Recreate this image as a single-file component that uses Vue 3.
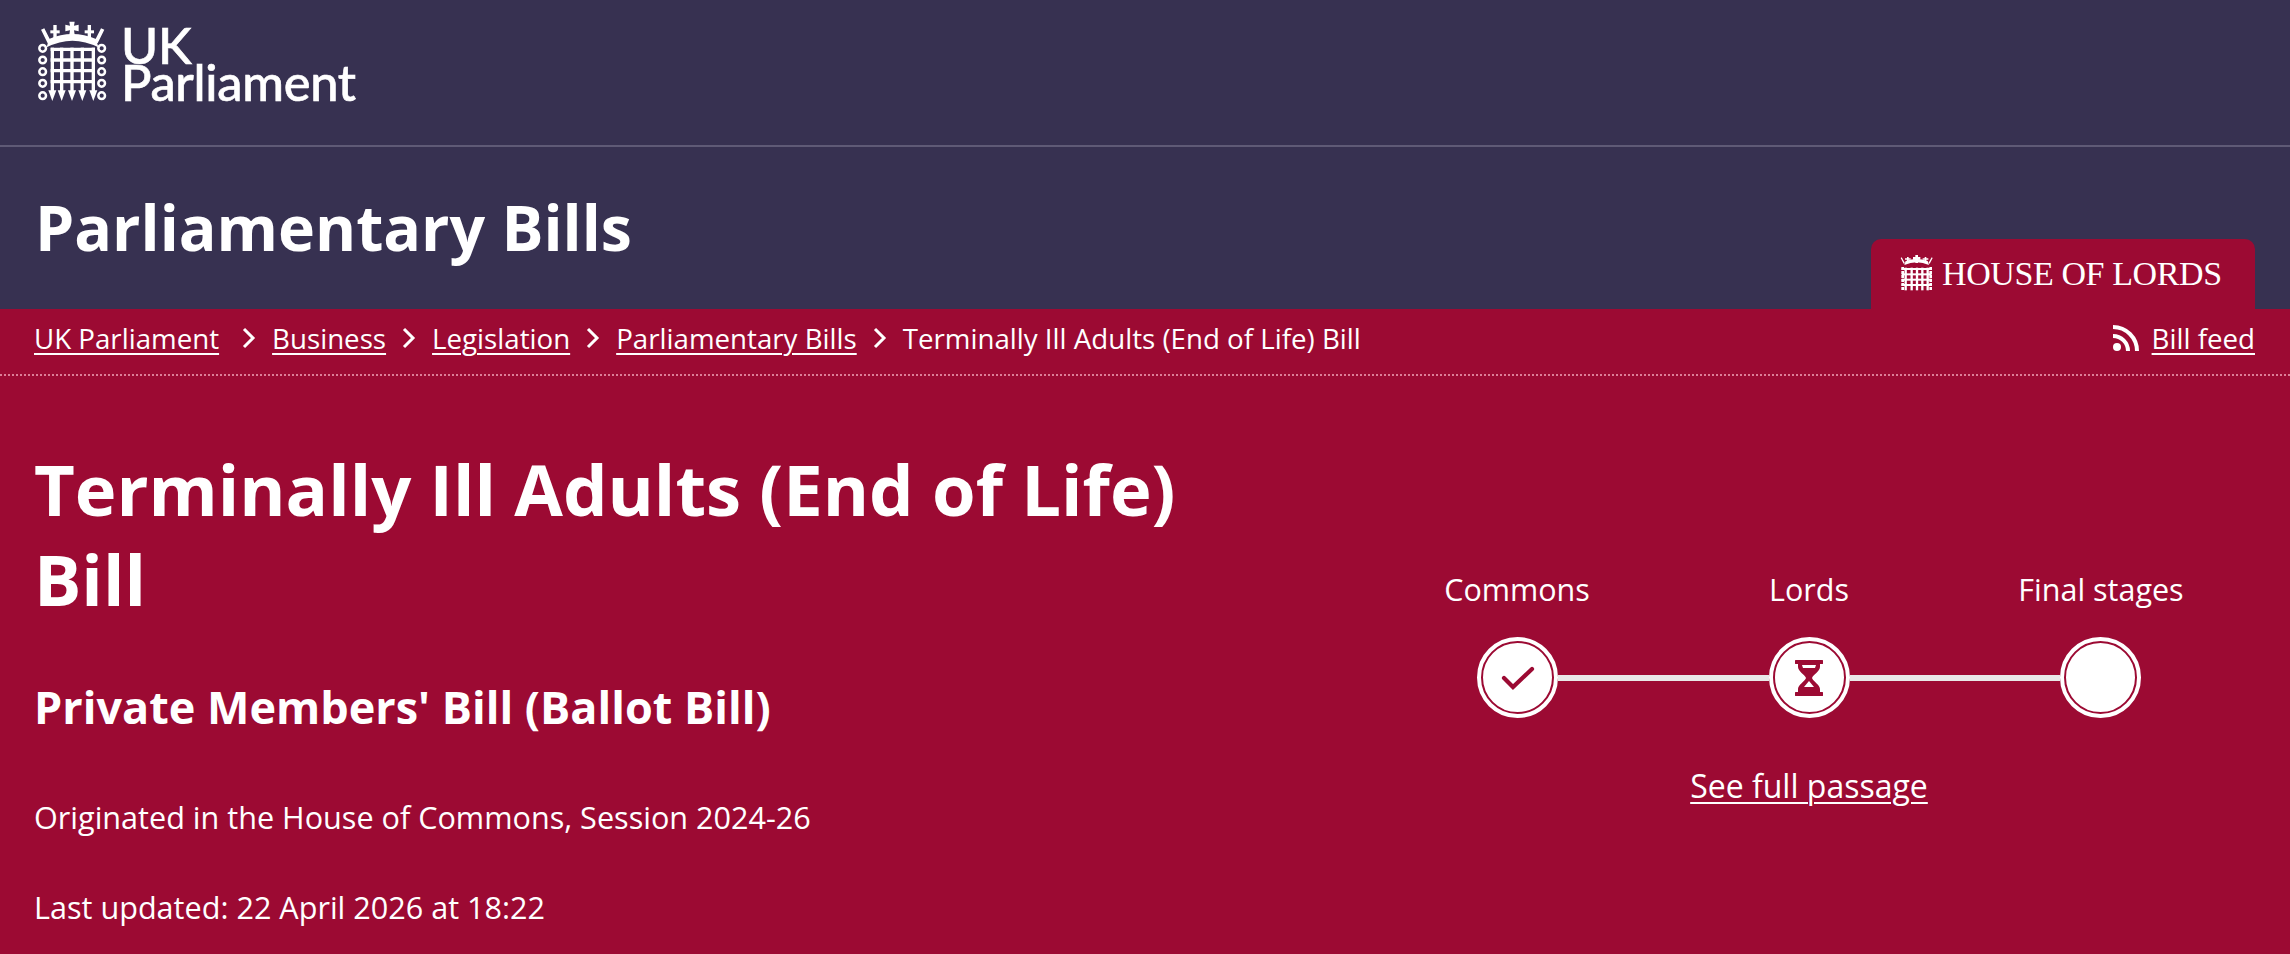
<script setup>
const crumbs = ['UK Parliament', 'Business', 'Legislation', 'Parliamentary Bills']
const bars = [67, 95, 126, 157, 190]
const rows = [103, 135, 167, 200]
const links = [100, 135, 170, 205, 242]
const smallBars = [62, 80, 96, 112, 128]
const smallRows = [72, 88, 104, 120]
const crosses = [
  { x: 75, y: 52 },
  { x: 178, y: 52 }
]
</script>

<template>
  <div class="page">
    <header class="top">
      <a class="logo">
        <svg class="port" viewBox="0 0 270 285" width="90" height="95">
          <g fill="#fff">
            <path d="M50 97Q127 57 205 97L198 72Q127 42 57 72Z" />
            <path d="M118 20h16l-2 12 14-3v20l-14-3 3 20h-18l3-20-14 3V29l14 3z" />
            <g v-for="c in crosses" :key="c.x">
              <rect :x="c.x - 5" :y="c.y - 22" width="10" height="42" />
              <rect :x="c.x - 14" :y="c.y - 6" width="28" height="9" />
            </g>
          </g>
          <g fill="none" stroke="#fff">
            <path d="M38 42l20 40M218 42l-20 40" stroke-width="11" />
            <circle v-for="l in links" :key="'a' + l" cx="38" :cy="l" r="10" stroke-width="7.5" />
            <circle v-for="l in links" :key="'b' + l" cx="215" :cy="l" r="10" stroke-width="7.5" />
            <path v-for="r in rows" :key="'r' + r" :d="`M62 ${r}H195`" stroke-width="10" />
            <path v-for="b in bars" :key="'c' + b" :d="`M${b} 98V235`" stroke-width="10" />
          </g>
          <g fill="#fff">
            <path v-for="b in bars" :key="'d' + b" :d="`M${b - 12} 226h24l-12 32z`" />
          </g>
        </svg>
        <span class="wordmark"><span>UK</span><span>Parliament</span></span>
      </a>
    </header>

    <div class="band">
      <h2 class="site">Parliamentary Bills</h2>
      <div class="tab">
        <svg class="port" viewBox="0 0 150 150" width="50" height="50">
          <g fill="#fff">
            <path d="M58 60Q95 44 132 60L128 48Q95 36 62 48Z" />
            <path d="M91 30h8v6h7v8h-7v10h-8V44h-7v-8h7z" />
            <path d="M66 36h5v14h-5zM119 36h5v14h-5zM60 40h17v4H60zM113 40h17v4h-17zM50 37l10 18-4 1-9-17zM140 37l-10 18 4 1 9-17z" />
          </g>
          <g fill="none" stroke="#fff">
            <path v-for="r in smallRows" :key="'s' + r" :d="`M50 ${r}H140`" stroke-width="6" />
            <path d="M53 66V135M137 66V135" stroke-width="8" stroke-dasharray="9 3" />
            <path v-for="b in smallBars" :key="'e' + b" :d="`M${b} 68V136`" stroke-width="7" />
          </g>
        </svg>
        <span class="house">HOUSE OF LORDS</span>
      </div>
    </div>

    <nav class="crumbs">
      <div class="trail">
        <template v-for="(c, i) in crumbs" :key="c">
          <a class="link">{{ c }}</a>
          <svg class="chev" :class="{ first: i === 0 }" viewBox="0 0 14 22" width="14" height="22">
            <path d="M2 2l9 9-9 9" fill="none" stroke="#fff" stroke-width="3" />
          </svg>
        </template>
        <span>Terminally Ill Adults (End of Life) Bill</span>
      </div>
      <div class="feed">
        <svg viewBox="0 0 28 28" width="28" height="28">
          <circle cx="5" cy="23" r="4" fill="#fff" />
          <path d="M1 12a15 15 0 0 1 15 15M1 3a24 24 0 0 1 24 24" fill="none" stroke="#fff" stroke-width="4" />
        </svg>
        <a class="link">Bill feed</a>
      </div>
    </nav>

    <section class="hero">
      <div class="info">
        <h1>Terminally Ill Adults (End of Life) Bill</h1>
        <h3>Private Members' Bill (Ballot Bill)</h3>
        <p class="origin">Originated in the House of Commons, Session 2024-26</p>
        <p class="updated">Last updated: 22 April 2026 at 18:22</p>
      </div>

      <div class="progress">
        <div class="labels">
          <span>Commons</span>
          <span>Lords</span>
          <span>Final stages</span>
        </div>
        <div class="track">
          <div class="stage">
            <svg viewBox="0 0 34 24" width="34" height="24">
              <path d="M3 12l9 9L31 3" fill="none" stroke="#9c0a33" stroke-width="4.2" stroke-linecap="round" />
            </svg>
          </div>
          <div class="line"></div>
          <div class="stage">
            <svg viewBox="0 0 28 36" width="28" height="36">
              <path fill="#9c0a33" fill-rule="evenodd" d="M1 0h26a2 2 0 0 1 0 4h-2v3c0 4-7 8-8 11 1 3 8 7 8 11v3h2a2 2 0 0 1 0 4H1a2 2 0 0 1 0-4h2v-3c0-4 7-8 8-11C10 15 3 11 3 7V4H1a2 2 0 0 1 0-4zM7 5l1 3h12l1-3zM14 21l-5 6h10z" />
            </svg>
          </div>
          <div class="line"></div>
          <div class="stage"></div>
        </div>
        <a class="link passage">See full passage</a>
      </div>
    </section>
  </div>
</template>

<style>
html, body { margin: 0; background: #9c0a33; }
</style>

<style scoped>
.page {
  width: 2290px;
  height: 954px;
  overflow: hidden;
  background: #9c0a33;
  color: #fff;
  font-family: "Open Sans", "Noto Sans", sans-serif;
}
.top {
  height: 147px;
  box-sizing: border-box;
  background: #373151;
  border-bottom: 2px solid #5f5a76;
  padding: 15px 0 0 30px;
}
.logo { display: flex; align-items: flex-start; gap: 1px; }
.port { display: block; flex: none; }
.wordmark {
  display: flex;
  flex-direction: column;
  font-family: Lato, sans-serif;
  font-weight: 500;
  font-size: 50.5px;
  line-height: 37px;
  padding-top: 11px;
  letter-spacing: -0.3px;
  -webkit-text-stroke: 0.6px #fff;
}
.band {
  height: 162px;
  background: #373151;
  display: flex;
  justify-content: space-between;
  align-items: flex-end;
  padding: 0 35px;
}
.site {
  margin: 0 0 48px;
  font-size: 62.6px;
  line-height: 68px;
  font-weight: 700;
}
.tab {
  width: 384px;
  height: 70px;
  box-sizing: border-box;
  background: #9c0a33;
  border-radius: 10px 10px 0 0;
  display: flex;
  align-items: flex-start;
  gap: 7px;
  padding: 6px 0 0 14px;
}
.house {
  margin-top: 10px;
  font-family: "Liberation Serif", serif;
  font-size: 34px;
  line-height: 38px;
  letter-spacing: -0.4px;
}
.crumbs {
  height: 67px;
  box-sizing: border-box;
  background-image: repeating-linear-gradient(to right, #dc7e97 0 2px, transparent 2px 4px);
  background-size: 100% 2px;
  background-position: 0 65px;
  background-repeat: no-repeat;
  display: flex;
  justify-content: space-between;
  align-items: flex-start;
  padding: 13px 35px 0 34px;
  font-size: 27.7px;
  line-height: 32px;
}
.trail { display: flex; align-items: center; }
.chev { margin: 0 16px 0 16px; flex: none; }
.chev.first { margin-left: 23px; }
.link { color: #fff; text-decoration: underline; text-underline-offset: 4px; text-decoration-thickness: 2px; }
.feed { display: flex; align-items: center; gap: 12px; }
.hero {
  display: grid;
  grid-template-columns: 1337px 876px;
  padding: 0 0 0 34px;
}
h1 {
  margin: 68px 0 0;
  max-width: 1220px;
  font-size: 70.5px;
  line-height: 90px;
  font-weight: 700;
}
h3 {
  margin: 57px 0 0;
  font-size: 45px;
  line-height: 52px;
  font-weight: 700;
}
.origin, .updated { margin: 0; font-size: 30.6px; line-height: 38px; }
.origin { margin-top: 65px; }
.updated { margin-top: 52px; }
.progress {
  margin-top: 193px;
  display: flex;
  flex-direction: column;
  align-items: center;
}
.labels {
  align-self: stretch;
  display: grid;
  grid-template-columns: 1fr 1fr 1fr;
  text-align: center;
  font-size: 30.5px;
  line-height: 40px;
}
.track {
  align-self: stretch;
  box-sizing: border-box;
  display: flex;
  align-items: center;
  margin-top: 32px;
  padding: 0 110px;
}
.stage {
  width: 69px;
  height: 69px;
  flex: none;
  border-radius: 50%;
  background: #fff;
  border: 2px solid #9c0a33;
  box-sizing: content-box;
  outline: 4.5px solid #fff;
  display: flex;
  align-items: center;
  justify-content: center;
}
.line { flex: 1; height: 6px; background: #e9e8e8; margin: 0 4px; }
.passage { margin-top: 52px; font-size: 32px; line-height: 40px; }
</style>
